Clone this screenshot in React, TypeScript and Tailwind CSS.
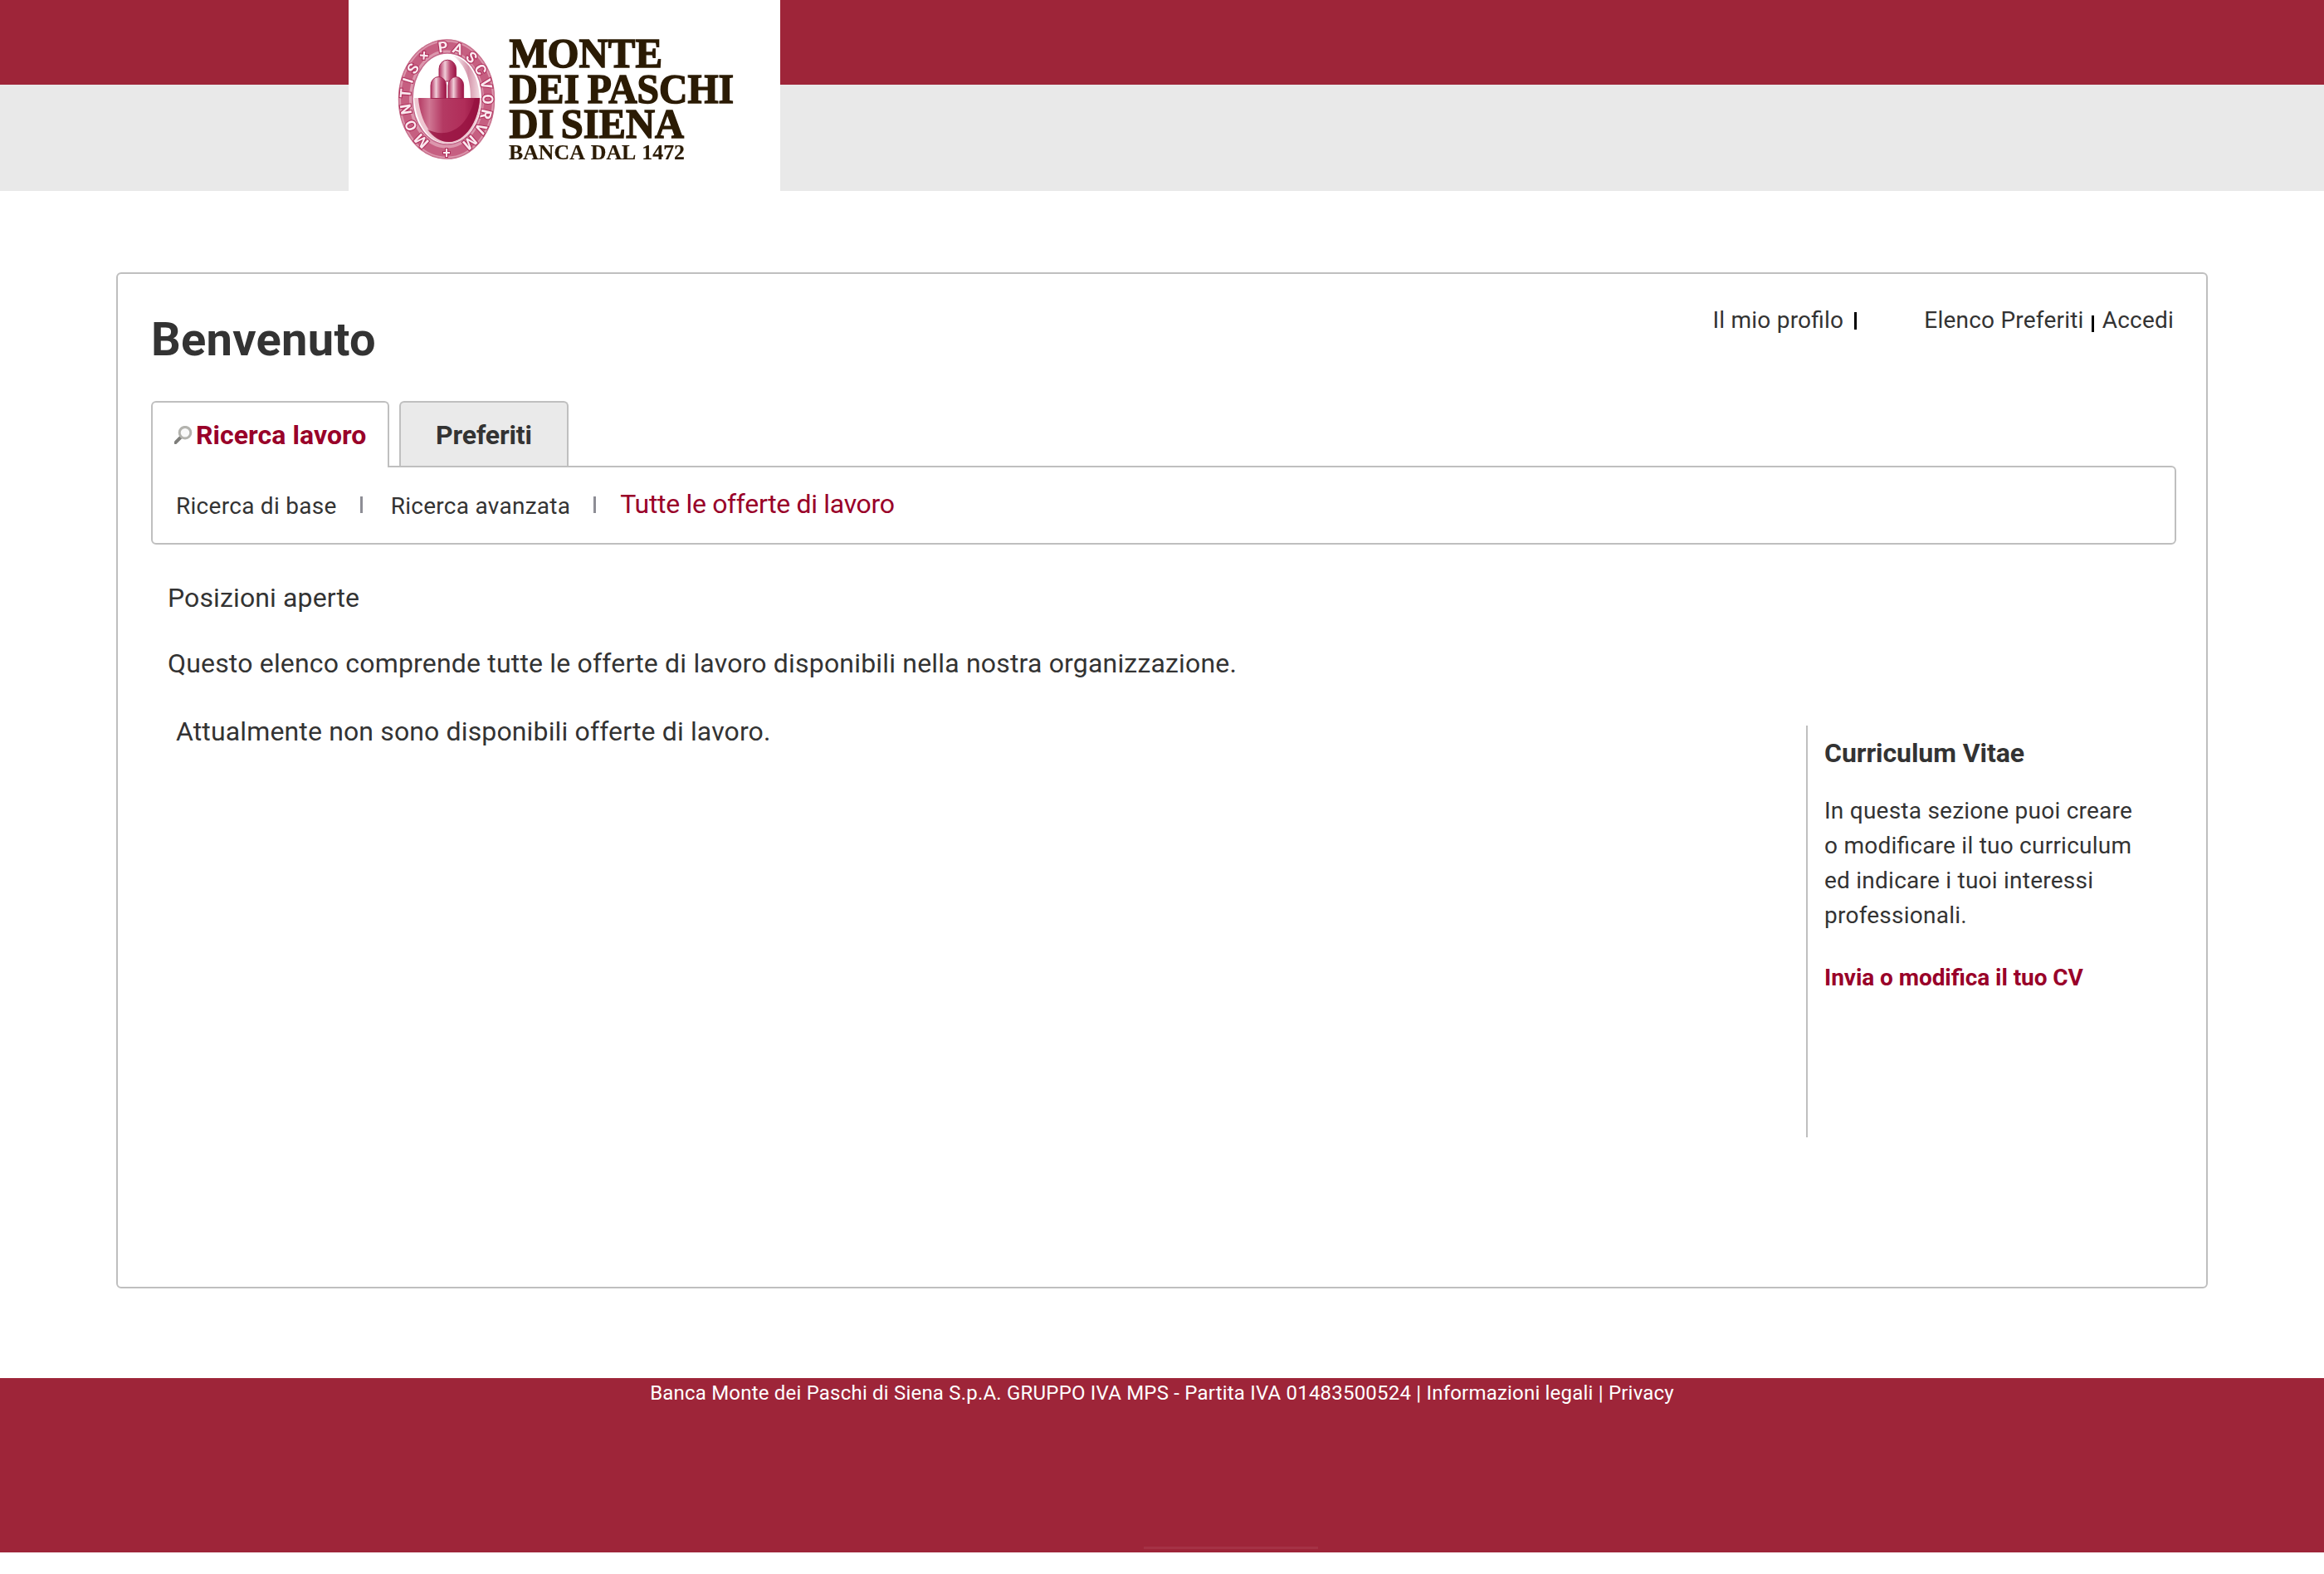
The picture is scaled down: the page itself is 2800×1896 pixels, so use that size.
import React from 'react';

const ring = 'M538 176.5 A43.5 57 0 0 1 538 62.5 A43.5 57 0 0 1 538 176.5';

function Logo() {
  return (
    <svg className="block blur-[0.7px]" width="520" height="230" viewBox="420 0 520 230">
      <defs>
        <path id="ring" d={ring} />
        <linearGradient id="fig" x1="0" x2="1">
          <stop offset="0" stopColor="#b03060" />
          <stop offset="0.35" stopColor="#f0cdd8" />
          <stop offset="0.65" stopColor="#bb4a72" />
          <stop offset="1" stopColor="#9c1244" />
        </linearGradient>
        <linearGradient id="cup" x1="0" x2="1">
          <stop offset="0" stopColor="#b43a63" />
          <stop offset="0.18" stopColor="#cf7693" />
          <stop offset="0.4" stopColor="#b43a63" />
          <stop offset="0.75" stopColor="#b02d59" />
          <stop offset="1" stopColor="#96103f" />
        </linearGradient>
        <linearGradient id="shade" x1="0" x2="1">
          <stop offset="0" stopColor="#ffffff" />
          <stop offset="0.6" stopColor="#d596ab" />
          <stop offset="1" stopColor="#f3dbe2" />
        </linearGradient>
      </defs>
      <ellipse cx="538" cy="119.6" rx="58" ry="72" fill="#dc97ad" />
      <ellipse cx="538" cy="119.6" rx="50" ry="64" fill="none" stroke="#c65f81" strokeWidth="10" />
      <ellipse cx="538" cy="119.6" rx="57.5" ry="71.5" fill="none" stroke="#c9738f" strokeWidth="1.5" />
      <ellipse cx="539" cy="119" rx="42" ry="55" fill="#ffffff" stroke="#c4688a" strokeWidth="1.5" />
      <path d="M544 66 C568 72 577 96 578 118 L567 118 C567 98 562 78 544 66Z" fill="url(#shade)" />
      <path d="M499 118 H580 C579 148 562 173 540 173 C516 173 501 148 499 118Z" fill="#eec6d1" />
      <path d="M504 118 H578 C577 146 560 171 541 171 C521 171 506 146 504 118Z" fill="url(#cup)" />
      <path d="M578 118 C577 146 560 171 541 171 C530 171 522 165 515 156 C535 166 562 160 572 118Z" fill="#96103f" opacity="0.75" />
      <path d="M529 98 V83 A10.3 10.8 0 0 1 549.6 83 V98Z" fill="url(#fig)" stroke="#a32652" strokeWidth="1" />
      <path d="M519 118.5 V103 A9.3 10.5 0 0 1 537.6 103 V118.5Z" fill="url(#fig)" stroke="#a32652" strokeWidth="1" />
      <path d="M540 118.5 V103 A9.3 10.5 0 0 1 558.6 103 V118.5Z" fill="url(#fig)" stroke="#a32652" strokeWidth="1" />
      <g className="font-['Roboto'] text-[18px] font-bold" fill="#fbeaf0" stroke="#b0305c" strokeWidth="2.2" paintOrder="stroke">
        <text><textPath href="#ring" startOffset="21" textLength="99">MONTIS</textPath></text>
        <text><textPath href="#ring" startOffset="128">×</textPath></text>
        <text><textPath href="#ring" startOffset="149" textLength="149">PASCVORVM</textPath></text>
      </g>
      <path d="M538 178 V190 M533 184 H543" stroke="#b0305c" strokeWidth="4" />
      <path d="M538 179 V189 M534 184 H542" stroke="#fbeaf0" strokeWidth="2" />
      <g className="font-['Liberation_Serif'] font-bold" fill="#2b1b04" stroke="#2b1b04" strokeWidth="1.5">
        <text className="text-[51px]" x="613.5" y="81.3" textLength="184.5" lengthAdjust="spacingAndGlyphs">MONTE</text>
        <text className="text-[51px] [word-spacing:-2.5px]" x="613.5" y="123.6" textLength="270.5" lengthAdjust="spacingAndGlyphs">DEI PASCHI</text>
        <text className="text-[51px] [word-spacing:-4px]" x="613.5" y="165.6" textLength="210.5" lengthAdjust="spacingAndGlyphs">DI SIENA</text>
        <text className="text-[26px] [word-spacing:2px]" strokeWidth="0.2" x="613" y="192" textLength="212" lengthAdjust="spacingAndGlyphs">BANCA DAL 1472</text>
      </g>
    </svg>
  );
}

function SearchIcon() {
  return (
    <svg className="block h-[22px] w-[22px]" viewBox="0 0 22 22" fill="none">
      <path d="M0 21.5 L8 13.5" stroke="#7d7d7a" strokeWidth="4" />
      <circle cx="13" cy="8.2" r="6.8" stroke="#b3b3ae" strokeWidth="3" fill="#fafafa" />
    </svg>
  );
}

export default function App() {
  return (
    <div className="flex h-[1896px] w-[2800px] flex-col bg-white font-['Roboto',sans-serif] text-[28px] leading-[42px] text-[#333333] [font-feature-settings:'liga']">
      <header className="h-[230px] border-t-[102px] border-[#9e2539] bg-[#e9e9e9]">
        <div className="-mt-[102px] ml-[420px] h-[230px] w-[520px] bg-white">
          <Logo />
        </div>
      </header>

      <main className="mx-[140px] mt-[98px] h-[1224px] rounded-[6px] border-2 border-[#bfbfbf] pl-[40px] pr-[36px]">
        <div className="flex h-[153px] justify-between">
          <h1 className="mt-[37px] text-[56px] font-bold leading-[84px] tracking-[0.3px]">Benvenuto</h1>
          <nav className="mt-[35px] flex items-start pr-[3px] tracking-[0.22px]">
            <a>Il mio profilo</a>
            <span className="ml-[13px] mt-[11px] h-[21px] w-[3px] bg-black" />
            <a className="ml-[81px]">Elenco Preferiti</a>
            <span className="ml-[9px] mt-[15px] h-[20px] w-[3px] bg-black" />
            <a className="ml-[10px]">Accedi</a>
          </nav>
        </div>

        <div className="flex gap-[12px] text-[32px] font-bold leading-[48px]">
          <div className="relative z-10 -mb-[2px] flex h-[80px] w-[287px] rounded-t-[6px] border-2 border-b-0 border-[#bfbfbf] bg-white pl-[26px] pt-[15px] text-[#990029]">
            <div className="mr-[4px] mt-[13px]"><SearchIcon /></div>
            <span className="tracking-[0.05px]">Ricerca lavoro</span>
          </div>
          <div className="h-[78px] w-[204px] rounded-t-[6px] border-2 border-b-0 border-[#bfbfbf] bg-[#eaeaea] pl-[42px] pt-[15px] tracking-[-0.15px]">
            Preferiti
          </div>
        </div>
        <div className="flex h-[95px] items-start rounded-[6px] rounded-tl-none border-2 border-[#bfbfbf] pl-[28px] pt-[20px] tracking-[0.28px]">
          <a className="mt-[6px]">Ricerca di base</a>
          <span className="ml-[28px] mt-[15px] h-[20px] w-[3px] bg-[#8d8d95]" />
          <a className="ml-[34px] mt-[6px]">Ricerca avanzata</a>
          <span className="ml-[28px] mt-[15px] h-[20px] w-[3px] bg-[#8d8d95]" />
          <a className="ml-[29px] text-[32px] leading-[48px] tracking-[-0.33px] text-[#990029]">Tutte le offerte di lavoro</a>
        </div>

        <div className="flex justify-between">
          <div className="pl-[20px] pt-[40px] text-[32px] leading-[48px] tracking-[0.18px]">
            <h2 className="tracking-[0.12px]">Posizioni aperte</h2>
            <p className="mt-[31px]">Questo elenco comprende tutte le offerte di lavoro disponibili nella nostra organizzazione.</p>
            <p className="mt-[34px] pl-[10px] tracking-[0.14px]">Attualmente non sono disponibili offerte di lavoro.</p>
          </div>
          <aside className="mt-[218px] h-[496px] w-[446px] border-l-2 border-[#bfbfbf] pl-[20px] pt-[9px]">
            <h2 className="text-[32px] font-bold leading-[48px] tracking-[-0.06px]">Curriculum Vitae</h2>
            <p className="mt-[25px] tracking-[0.24px]">In questa sezione puoi creare<br />o modificare il tuo curriculum<br />ed indicare i tuoi interessi<br />professionali.</p>
            <a className="mt-[33px] block font-bold tracking-[-0.06px] text-[#990029]">Invia o modifica il tuo CV</a>
          </aside>
        </div>
      </main>

      <footer className="mt-[108px] flex h-[210px] flex-col justify-between bg-[#9e2539] text-center text-[24px] leading-[36px] tracking-[0.2px] text-white">
        <p>Banca Monte dei Paschi di Siena S.p.A. GRUPPO IVA MPS - Partita IVA 01483500524 | Informazioni legali | Privacy</p>
        <div className="mb-[4px] ml-[1378px] h-[3px] w-[210px] bg-[#a53245]" />
      </footer>
    </div>
  );
}
